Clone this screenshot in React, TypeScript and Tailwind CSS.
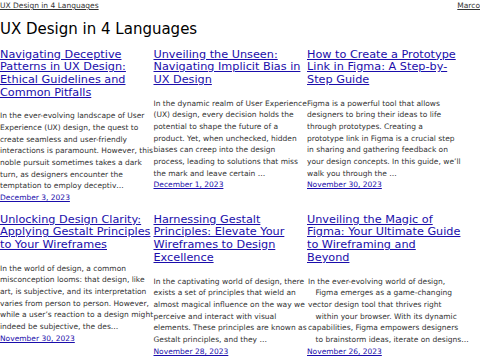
import React from 'react';

interface Post {
  title: string;
  excerpt: string;
  date: string;
  lines?: { text: string; indent?: boolean }[];
}

const posts: Post[] = [
  {
    title: 'Navigating Deceptive Patterns in UX Design: Ethical Guidelines and Common Pitfalls',
    excerpt:
      'In the ever-evolving landscape of User Experience (UX) design, the quest to create seamless and user-friendly interactions is paramount. However, this noble pursuit sometimes takes a dark turn, as designers encounter the temptation to employ deceptiv…',
    date: 'December 3, 2023',
  },
  {
    title: 'Unveiling the Unseen: Navigating Implicit Bias in UX Design',
    excerpt:
      'In the dynamic realm of User Experience (UX) design, every decision holds the potential to shape the future of a product. Yet, when unchecked, hidden biases can creep into the design process, leading to solutions that miss the mark and leave certain …',
    date: 'December 1, 2023',
  },
  {
    title: 'How to Create a Prototype Link in Figma: A Step-by-Step Guide',
    excerpt:
      'Figma is a powerful tool that allows designers to bring their ideas to life through prototypes. Creating a prototype link in Figma is a crucial step in sharing and gathering feedback on your design concepts. In this guide, we’ll walk you through the …',
    date: 'November 30, 2023',
  },
  {
    title: 'Unlocking Design Clarity: Applying Gestalt Principles to Your Wireframes',
    excerpt:
      'In the world of design, a common misconception looms: that design, like art, is subjective, and its interpretation varies from person to person. However, while a user’s reaction to a design might indeed be subjective, the des…',
    date: 'November 30, 2023',
  },
  {
    title: 'Harnessing Gestalt Principles: Elevate Your Wireframes to Design Excellence',
    excerpt:
      'In the captivating world of design, there exists a set of principles that wield an almost magical influence on the way we perceive and interact with visual elements. These principles are known as Gestalt principles, and they …',
    date: 'November 28, 2023',
  },
  {
    title: 'Unveiling the Magic of Figma: Your Ultimate Guide to Wireframing and Beyond',
    excerpt: '',
    lines: [
      { text: 'In the ever-evolving world of design,' },
      { text: 'Figma emerges as a game-changing', indent: true },
      { text: 'vector design tool that thrives right' },
      { text: 'within your browser. With its dynamic', indent: true },
      { text: 'capabilities, Figma empowers designers' },
      { text: 'to brainstorm ideas, iterate on designs…', indent: true },
    ],
    date: 'November 26, 2023',
  },
];

const App: React.FC = () => {
  return (
    <div className="w-[480px] h-[360px] overflow-hidden bg-white font-['DejaVu_Sans',sans-serif] text-[#333]">
      {/* Top bar */}
      <div className="flex justify-between h-[12px] text-[7.5px] leading-[11.67px]">
        <a href="#" className="underline text-[#333]">UX Design in 4 Languages</a>
        <a href="#" className="underline text-[#333]">Marco</a>
      </div>

      <h1 className="mt-[9px] text-[15px] leading-[17.5px] text-black">UX Design in 4 Languages</h1>

      {/* Posts */}
      <div className="mt-[10px] w-[461px] grid grid-cols-[153.5px_153.5px_154px] gap-y-[10px]">
        {posts.map((post) => (
          <div key={post.title} className="min-w-0">
            <a href="#" className="block underline text-[11.25px] leading-[12.7px] text-[#1a0dab]">
              {post.title}
            </a>
            {post.lines ? (
              <p className="mt-[11px] text-[7.5px] leading-[11.67px] text-[#333] whitespace-nowrap">
                {post.lines.map((l) => (
                  <span key={l.text} className={l.indent ? 'block pl-[8.5px]' : 'block pl-[1px]'}>
                    {l.text}
                  </span>
                ))}
              </p>
            ) : (
              <p className="mt-[11px] text-[7.5px] leading-[11.67px] text-[#333]">{post.excerpt}</p>
            )}
            <a href="#" className="block underline text-[7.5px] leading-[11.67px] text-[#1a0dab]">
              {post.date}
            </a>
          </div>
        ))}
      </div>
    </div>
  );
};

export default App;
